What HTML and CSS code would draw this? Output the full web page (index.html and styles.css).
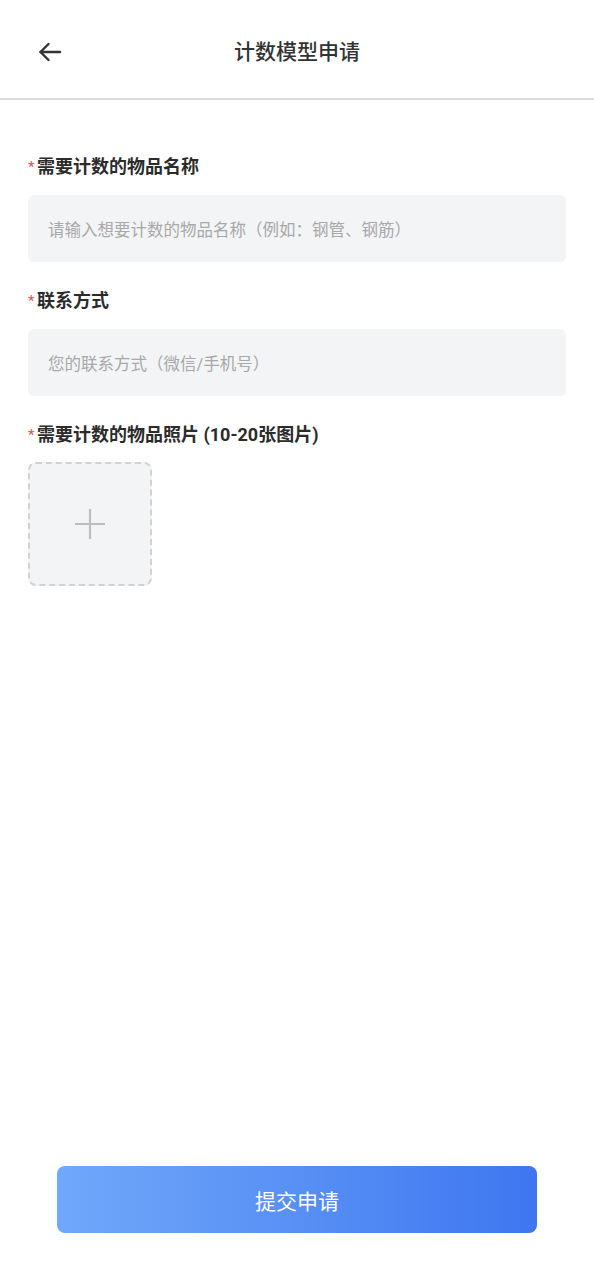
FILE: index.html
```html
<!DOCTYPE html>
<html lang="zh-CN">
<head>
<meta charset="utf-8">
<link rel="stylesheet" href="styles.css">
</head>
<body>
<div class="page">
  <header class="nav">
    <span class="back">
      <svg width="26" height="26" viewBox="0 0 26 26" fill="none" stroke="#333" stroke-width="2.4" stroke-linecap="round" stroke-linejoin="round"><path d="M23 13H3.5"/><path d="M11.5 5L3.5 13l8 8"/></svg>
    </span>
    <h1 class="title">计数模型申请</h1>
  </header>
  <main class="form">
    <div class="field">
      <div class="label"><span class="star">*</span>需要计数的物品名称</div>
      <div class="input">请输入想要计数的物品名称（例如：钢管、钢筋）</div>
    </div>
    <div class="field">
      <div class="label"><span class="star">*</span>联系方式</div>
      <div class="input">您的联系方式（微信/手机号）</div>
    </div>
    <div class="field">
      <div class="label"><span class="star">*</span>需要计数的物品照片 (10-20张图片)</div>
      <div class="upload">
        <svg width="32" height="32" viewBox="0 0 32 32" stroke="#bdbdbd" stroke-width="2.2"><path d="M16 1v30M1 16h30"/></svg>
      </div>
    </div>
  </main>
  <div class="footer">
    <button class="submit">提交申请</button>
  </div>
</div>
</body>
</html>
```
FILE: styles.css
```css
* { box-sizing: border-box; }
html, body { margin: 0; padding: 0; background: #fff; }
body { font-family: Roboto, "Noto Sans CJK SC", sans-serif; color: #333; }
.page { min-height: 100vh; display: flex; flex-direction: column; }
.nav {
  height: 100px;
  padding-top: 6px;
  border-bottom: 2px solid #dcdcdc;
  display: flex;
  align-items: center;
  justify-content: center;
  position: relative;
}
.back { position: absolute; left: 37px; top: 39px; display: flex; }
.title { margin: 0; font-size: 21px; font-weight: 500; color: #333; line-height: 28px; }
.form { padding: 54px 28px 0; }
.field { margin-bottom: 26px; }
.label {
  font-size: 18px;
  font-weight: 700;
  line-height: 26px;
  color: #2b2b2b;
  margin-bottom: 15px;
  display: flex;
  align-items: center;
}
.star { color: #e0534a; font-size: 15px; font-weight: 400; margin-right: 1px; width: 8px; }
.input {
  height: 67px;
  background: #f3f4f6;
  border-radius: 6px;
  padding: 0 20px;
  display: flex;
  align-items: center;
  font-size: 16.5px;
  color: #a8a8a8;
}
.upload {
  width: 124px;
  height: 124px;
  border: 2px dashed #d2d2d2;
  border-radius: 8px;
  background: #f3f4f6;
  display: flex;
  align-items: center;
  justify-content: center;
  margin-top: -1px;
}
.footer { margin-top: auto; padding: 0 57px 47px; }
.submit {
  width: 100%;
  height: 67px;
  border: none;
  border-radius: 8px;
  background: linear-gradient(90deg, #70a8fb 0%, #5a92f5 45%, #3e76f1 100%);
  color: #fff;
  font-family: Roboto, "Noto Sans CJK SC", sans-serif;
  font-size: 21px;
  font-weight: 400;
}
```
